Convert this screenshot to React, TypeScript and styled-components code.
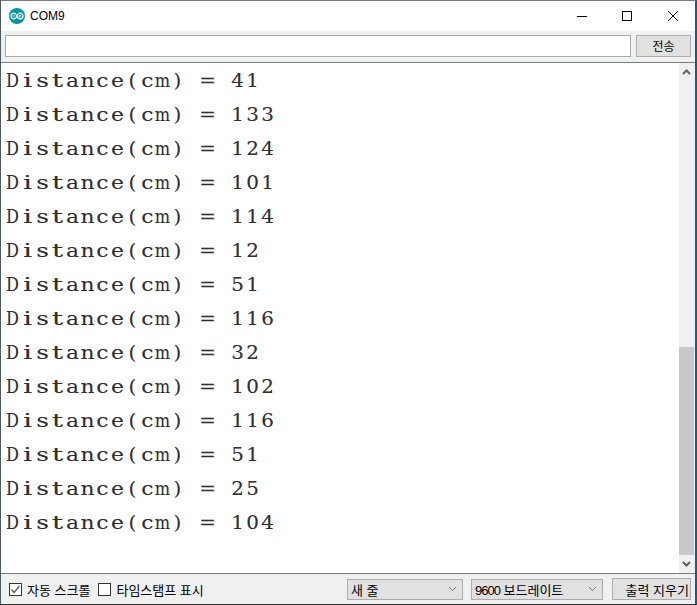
import React from "react";
import styled, { createGlobalStyle } from "styled-components";

const Global = createGlobalStyle`
  html, body { margin: 0; padding: 0; background: #f0f0f0; overflow: hidden; }
  * { box-sizing: border-box; }
`;
const KR = `"Liberation Sans", "Noto Sans CJK KR", sans-serif`;

const Window = styled.div`
  width: 697px; height: 605px; display: flex; flex-direction: column;
  background: #f0f0f0;
  border: 1px solid #4a5a60; border-right: 2px solid #1f5a78; border-top-color: #7a7a7a;
  border-bottom-color: #333;
`;
const TitleBar = styled.div`
  height: 30px; background: #fff; display: flex; align-items: center; padding-left: 8px; flex: none;
`;
const Title = styled.span`
  font: 12px "Liberation Sans", sans-serif; color: #000; margin-left: 5px; flex: 1;
`;
const WinButtons = styled.div`
  display: grid; grid-template-columns: 44px 46px 46px; height: 100%; margin-right: -1px;
`;
const WinButton = styled.div`
  height: 30px; display: flex; align-items: center; justify-content: center;
`;
const SendRow = styled.div`
  height: 32px; flex: none; display: flex; align-items: center; gap: 5px; padding: 0 4px 2px 4px;
  border-bottom: 1px solid #6f7f85;
`;
const Input = styled.div`
  flex: 1; height: 22px; background: #fff; border: 1px solid #a8a8a8;
`;
const Button = styled.div<{ $w: number; $right?: boolean }>`
  width: ${p => p.$w}px; height: 22px; flex: none; background: #e1e1e1; border: 1px solid #adadad;
  font: 12px ${KR}; color: #000; display: flex; align-items: center;
  justify-content: ${p => (p.$right ? "flex-end" : "center")};
  padding-right: ${p => (p.$right ? "1px" : "0")};
`;
const BarButton = styled(Button)`font-size: 13px; margin-left: 1px;`;
const Main = styled.div`flex: 1; display: flex; min-height: 0; background: #fff;`;
const Output = styled.div`
  flex: 1; padding: 0 0 0 3.5px; overflow: hidden;
`;
const Line = styled.div`
  height: 34px; font: 19px/34px "DejaVu Serif", serif; color: #303030; white-space: pre; display: flex;
  text-shadow: -0.2px 0 rgba(0, 90, 200, 0.2), 0.2px 0 rgba(200, 70, 0, 0.2);
`;
const Cell = styled.span<{ $sx: number }>`
  width: 15px; flex: none; display: flex; justify-content: center;
  transform: scaleX(${p => p.$sx});
`;
const Scroll = styled.div`
  width: 16px; flex: none; background: #f0f0f0; display: flex; flex-direction: column;
  padding-right: 1px;
`;
const Arrow = styled.div`
  height: 18px; flex: none; display: flex; align-items: center; justify-content: center;
`;
const Track = styled.div`flex: 1; display: flex; flex-direction: column; justify-content: flex-end;`;
const Thumb = styled.div`height: 208px; background: #c8c8c8;`;
const BottomBar = styled.div`
  height: 31px; flex: none; border-top: 1px solid #6f7f85; display: flex; align-items: center;
  padding: 0 4px 0 8px; font: 13px ${KR}; color: #000;
`;
const Check = styled.div`
  width: 13px; height: 13px; background: #fff; border: 1px solid #333; margin-right: 5px;
  display: flex; align-items: center; justify-content: center;
`;
const Label = styled.span`margin-right: 8px;`;
const Spacer = styled.div`flex: 1;`;
const Select = styled.div<{ $w: number }>`
  width: ${p => p.$w}px; height: 21px; background: #e1e1e1; border: 1px solid #adadad;
  margin-right: 8px; padding: 0 5px 0 3px; display: flex; align-items: center; justify-content: space-between;
`;
const Digits = styled.span`letter-spacing: -1px;`;

const Logo = () => (
  <svg width="16" height="16" viewBox="0 0 16 16">
    <ellipse cx="8" cy="8" rx="8" ry="8" fill="#00979c" />
    <path d="M5 5.2C7 5.2 7.5 7 8 8 8.5 9 9 10.8 11 10.8 12.6 10.8 14 9.6 14 8 14 6.4 12.6 5.2 11 5.2 9 5.2 8.5 7 8 8 7.5 9 7 10.8 5 10.8 3.4 10.8 2 9.6 2 8 2 6.4 3.4 5.2 5 5.2Z" fill="none" stroke="#fff" strokeWidth="1.2" />
    <path d="M3.8 8h2.4M9.8 8h2.4M11 6.8v2.4" stroke="#fff" strokeWidth="0.9" />
  </svg>
);
const Chevron = ({ up, color = "#606060", w = 2 }: { up?: boolean; color?: string; w?: number }) => (
  <svg width="9" height="6" viewBox="0 0 9 6">
    <path d={up ? "M1 5l3.5-3.5L8 5" : "M1 1l3.5 3.5L8 1"} fill="none" stroke={color} strokeWidth={w} />
  </svg>
);

const values = [41, 133, 124, 101, 114, 12, 51, 116, 32, 102, 116, 51, 25, 104];
const stretch = (c: string) => {
  if (c === "m" || c === "D") return 0.85;
  if (c === "i" || c === "t") return 1.5;
  if (c === "s") return 1.3;
  if (/[a-z]/.test(c)) return 1.15;
  return 1.05;
};

export default function App() {
  return (
    <Window>
      <Global />
      <TitleBar>
        <Logo />
        <Title>COM9</Title>
        <WinButtons>
          <WinButton>
            <svg width="10" height="10" viewBox="0 0 10 10"><path d="M0 5.5h10" stroke="#000" /></svg>
          </WinButton>
          <WinButton>
            <svg width="10" height="10" viewBox="0 0 10 10"><rect x=".5" y=".5" width="9" height="9" fill="none" stroke="#000" /></svg>
          </WinButton>
          <WinButton>
            <svg width="10" height="10" viewBox="0 0 10 10"><path d="M0 0l10 10M10 0L0 10" stroke="#000" /></svg>
          </WinButton>
        </WinButtons>
      </TitleBar>
      <SendRow>
        <Input />
        <Button $w={55}>전송</Button>
      </SendRow>
      <Main>
        <Output>
          {values.map((v, i) => (
            <Line key={i}>
              {Array.from(`Distance(cm) = ${v}`).map((c, j) => (
                <Cell key={j} $sx={stretch(c)}>{c}</Cell>
              ))}
            </Line>
          ))}
        </Output>
        <Scroll>
          <Arrow><Chevron up /></Arrow>
          <Track><Thumb /></Track>
          <Arrow><Chevron /></Arrow>
        </Scroll>
      </Main>
      <BottomBar>
        <Check>
          <svg width="11" height="11" viewBox="0 0 11 11"><path d="M1.5 5.5L4 8.5 9.5 2" fill="none" stroke="#666" strokeWidth="1.5" /></svg>
        </Check>
        <Label>자동 스크롤</Label>
        <Check />
        <Label>타임스탬프 표시</Label>
        <Spacer />
        <Select $w={116}>새 줄<Chevron w={1} color="#777" /></Select>
        <Select $w={132}><span><Digits>9600</Digits> 보드레이트</span><Chevron w={1} color="#777" /></Select>
        <BarButton $w={79} $right>출력 지우기</BarButton>
      </BottomBar>
    </Window>
  );
}
